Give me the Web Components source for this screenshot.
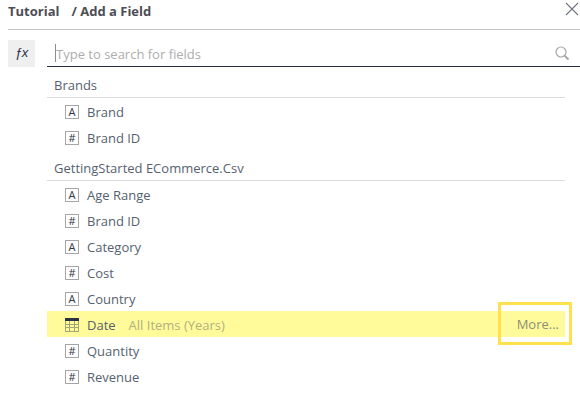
<!DOCTYPE html>
<html lang="en">
<head>
<meta charset="utf-8">
<title>Add a Field</title>
<style>
body { margin: 0; background: #fff; color: #565f70; font: 13px/26px "Open Sans", "Noto Sans", sans-serif; }
</style>
</head>
<body>
<field-dialog>
  <dialog-header slot="header" parent="Tutorial" heading="/ Add a Field"></dialog-header>
  <formula-button slot="tool"></formula-button>
  <field-search></field-search>
  <field-group heading="Brands">
    <field-item kind="text" name="Brand"></field-item>
    <field-item kind="number" name="Brand ID"></field-item>
  </field-group>
  <field-group heading="GettingStarted ECommerce.Csv">
    <field-item kind="text" name="Age Range"></field-item>
    <field-item kind="number" name="Brand ID"></field-item>
    <field-item kind="text" name="Category"></field-item>
    <field-item kind="number" name="Cost"></field-item>
    <field-item kind="text" name="Country"></field-item>
    <field-item kind="date" name="Date" detail="All Items (Years)" active></field-item>
    <field-item kind="number" name="Quantity"></field-item>
    <field-item kind="number" name="Revenue"></field-item>
  </field-group>
</field-dialog>
<script>
class BaseElement extends HTMLElement {
  render(html) {
    if (!this.shadowRoot) this.attachShadow({ mode: "open" });
    this.shadowRoot.innerHTML = html;
  }
  attr(name) { return this.getAttribute(name) || ""; }
}

customElements.define("field-dialog", class extends BaseElement {
  connectedCallback() {
    this.render(`
      <style>
        :host { display: block; padding-left: 8px; }
        .body { display: grid; grid-template-columns: 27px minmax(0, 1fr); column-gap: 12px; align-items: start; padding-top: 10px; }
      </style>
      <slot name="header"></slot>
      <div class="body"><slot name="tool"></slot><main><slot></slot></main></div>`);
  }
});

customElements.define("dialog-header", class extends BaseElement {
  connectedCallback() {
    this.render(`
      <style>
        :host { display: block; border-bottom: 1px solid #c4c4c4; }
        header { display: flex; height: 29px; align-items: flex-start; gap: 12px; color: #4d4d55; }
        h1, .parent { margin: 0; font-size: 13px; line-height: 22px; font-weight: 700; }
        button { margin-left: auto; padding: 2px 1px; border: 0; background: none; color: #6f7480; line-height: 0; cursor: pointer; }
      </style>
      <header>
        <span class="parent">${this.attr("parent")}</span><h1>${this.attr("heading")}</h1>
        <button type="button" aria-label="Close"><svg width="14" height="14" viewBox="0 0 14 14" fill="none" stroke="currentColor" stroke-width="1.1"><path d="M1 1 13 13M13 1 1 13"/></svg></button>
      </header>`);
  }
});

customElements.define("formula-button", class extends BaseElement {
  connectedCallback() {
    this.render(`
      <style>
        :host { display: block; }
        button { display: block; width: 100%; height: 27px; padding: 0 0 2px; border: 0; background: #efefef; color: #2b3245; font: italic 13px/25px "Liberation Sans", sans-serif; cursor: pointer; }
      </style>
      <button type="button" aria-label="Formula">ƒx</button>`);
  }
});

customElements.define("field-search", class extends BaseElement {
  connectedCallback() {
    this.render(`
      <style>
        :host { display: block; border-bottom: 1px solid #232b45; }
        form { display: flex; align-items: center; height: 26px; padding: 0 10px 0 8px; }
        .caret { width: 1px; height: 18px; background: #8d8d8d; }
        input { flex: 1; min-width: 0; padding: 2px 0 0; border: 0; outline: 0; background: none; color: inherit; font: inherit; line-height: 24px; }
        input::placeholder { color: #adadad; opacity: 1; }
        button { padding: 0; border: 0; background: none; color: #a8a8a8; line-height: 0; cursor: pointer; }
      </style>
      <form role="search">
        <span class="caret"></span>
        <input type="text" aria-label="Search for fields" placeholder="Type to search for fields">
        <button type="button" aria-label="Search"><svg width="15" height="15" viewBox="0 0 15 15" fill="none" stroke="currentColor"><circle cx="6" cy="6" r="5" stroke-width="1.2"/><path d="M9.6 9.6 13.5 13.5" stroke-width="2"/></svg></button>
      </form>`);
  }
});

customElements.define("field-group", class extends BaseElement {
  connectedCallback() {
    this.render(`
      <style>
        :host { display: block; margin-right: 15px; }
        h2 { margin: 0; padding: 6px 7px 0; border-bottom: 1px solid #dcdcdc; font-size: 13px; font-weight: 400; line-height: 24px; }
      </style>
      <section><h2>${this.attr("heading")}</h2><div role="list"><slot></slot></div></section>`);
  }
});

const letterBox = letter => `<span class="letter">${letter}</span>`;
const KIND_ICONS = {
  text: letterBox("A"),
  number: letterBox("#"),
  date: `<svg width="14" height="14" viewBox="0 0 14 14" shape-rendering="crispEdges"><rect width="14" height="3" fill="#2a3142"/><path d="M0 3v11M0 13.5h14M.5 3v11M13.5 3v11M4.5 3v11M9.5 3v11M0 6.5h14M0 9.5h14" fill="none" stroke="#a5a477"/></svg>`
};

customElements.define("field-item", class extends BaseElement {
  connectedCallback() {
    const active = this.hasAttribute("active");
    this.setAttribute("role", "listitem");
    this.render(`
      <style>
        :host { display: block; }
        :host([active]) { background: #fffb9b; }
        .row { display: flex; align-items: center; height: 26px; padding-left: 18px; }
        .icon { display: flex; width: 14px; margin: 2px 8px 0 0; }
        .letter { box-sizing: border-box; width: 14px; height: 14px; border: 1px solid #a6a6a6; color: #2f3645; font-size: 11px; line-height: 12px; text-align: center; }
        .name, .detail, button { padding-top: 2px; line-height: 24px; }
        .detail { margin-left: 13px; color: #b2b080; }
        .more { position: relative; margin-left: auto; }
        button { display: block; padding: 0 6px 0 0; border: 0; background: none; color: #8f8d77; font: inherit; cursor: pointer; }
        .callout { position: absolute; inset: -9px -7px -8px -19px; border: 3px solid #ffe14d; pointer-events: none; }
      </style>
      <div class="row">
        <span class="icon" aria-hidden="true">${KIND_ICONS[this.attr("kind")]}</span>
        <span class="name">${this.attr("name")}</span>
        ${active ? `<span class="detail">${this.attr("detail")}</span><span class="more"><button type="button">More...</button><span class="callout"></span></span>` : ""}
      </div>`);
  }
});
</script>
</body>
</html>
